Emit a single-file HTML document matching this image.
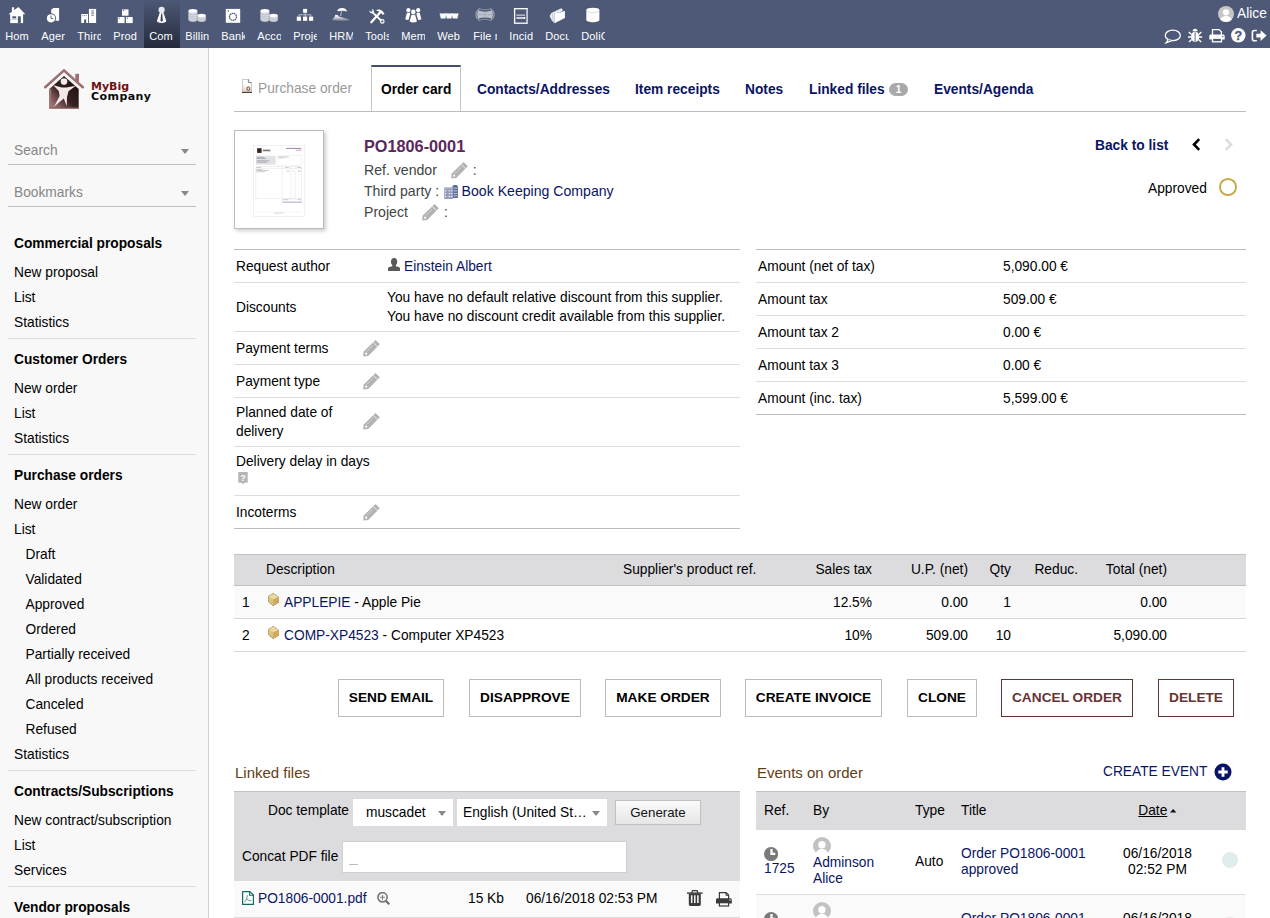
<!DOCTYPE html>
<html lang="en">
<head>
<meta charset="utf-8">
<title>Purchase order - PO1806-0001</title>
<style>
*{box-sizing:border-box}
html,body{margin:0;padding:0}
body{width:1270px;height:918px;overflow:hidden;background:#fff;color:#000;
 font-family:"Liberation Sans",Arial,Helvetica,sans-serif;font-size:13.76px;line-height:19px;position:relative}
a{color:#0a1464;text-decoration:none}
svg{display:block}

/* ---------- top bar ---------- */
#topbar{position:absolute;left:0;top:0;width:1270px;height:48px;background:#4d5976;color:#fff}
#tmenu{position:absolute;left:0;top:0;height:48px;margin:0;padding:0;list-style:none;display:flex}
#tmenu li{width:36px;height:48px;position:relative}
#tmenu li.sel{background:linear-gradient(to bottom,#4c5875 0%,#252b3c 100%)}
#tmenu li svg{position:absolute;left:0;top:0;width:36px;height:28px}
#tmenu li span{position:absolute;left:5.200px;top:28px;width:23.800px;height:16px;overflow:hidden;white-space:nowrap;
 font-size:11px;line-height:16px;color:#fff;letter-spacing:.15px}
#login{position:absolute;left:1237px;top:4px;height:20px;font-size:13.76px;line-height:20px;color:#fff}
#login svg{position:absolute;left:-19px;top:2px;width:16px;height:16px}
#ricons{position:absolute;left:1160px;top:26px;width:110px;height:20px}

/* ---------- side bar ---------- */
#side{position:absolute;left:0;top:48px;width:209px;height:870px;background:#f8f8f8;border-right:1px solid #d0d0d0;overflow:hidden}
#logo{position:absolute;left:44px;top:20px;width:112px;height:42px}
#logo .t1,#logo .t2{position:absolute;left:47px;font-family:"DejaVu Sans",Verdana,sans-serif;font-weight:bold;font-size:11px;line-height:12px;letter-spacing:0}
#logo .t1{top:12.500px;color:#6e0f14}
#logo .t2{top:23.300px;color:#0b0b0b;letter-spacing:.44px}
.ssel{position:absolute;left:8px;width:188px;height:31px;border-bottom:1px solid #c0c0c0;color:#868686;font-size:13.76px;line-height:20px;padding:7px 0 0 6px}
.ssel i{position:absolute;right:7px;top:15px;width:0;height:0;border-left:4px solid transparent;border-right:4px solid transparent;border-top:5px solid #888}
#vmenu{position:absolute;left:0;top:0;width:208px}
.blk{position:absolute;left:8px;width:188px;height:115px;border-bottom:1px solid #dcdcdc;margin:0;padding:0;list-style:none}
.blk li{position:absolute;left:6px;white-space:nowrap;height:19px;line-height:19px;color:#000}
.blk li.t{font-weight:bold;color:#000}
.blk li.s{left:17.500px}

/* ---------- main ---------- */
#main{position:absolute;left:209px;top:48px;width:1061px;height:870px;overflow:hidden}
#tabs{position:absolute;left:25px;top:63px;width:1012px;height:1px;background:#bdbdbd;z-index:2}
.tab{position:absolute;top:31.600px;font-weight:bold;color:#0a1464;white-space:nowrap;line-height:19px;height:19px}
#tabtitle{position:absolute;left:49px;top:31px;color:#999;font-size:13.76px;line-height:19px;white-space:nowrap}
#tabtitle svg{position:absolute;left:-16px;top:0}
#tabsel{position:absolute;left:162px;top:17px;width:90px;height:47px;border:1px solid #c4c4c4;border-top:2px solid #434e6b;border-bottom:0;background:#fff}
#tabsel b{position:absolute;left:9px;top:12.500px;line-height:19px;color:#000;white-space:nowrap}
.badge{display:inline-block;background:#a9a9a9;color:#fff;font-size:10px;line-height:13px;height:13px;min-width:19.600px;text-align:center;border-radius:6.500px;font-weight:bold;vertical-align:1px;margin-left:4px}

/* ---------- header card ---------- */
#thumb{position:absolute;left:25px;top:82px;width:90px;height:99px;border:1px solid #bbb;background:#fff;box-shadow:2px 2px 4px rgba(0,0,0,.2)}
#thumb svg{position:absolute;left:18.200px;top:14.200px}
#refid{position:absolute;left:155px;top:87.700px;font-size:16.250px;line-height:20px;font-weight:bold;color:#5a285a;white-space:nowrap}
#refidno{position:absolute;left:155px;top:112.100px;font-size:14.1px;line-height:21px;color:#444;white-space:nowrap}
#refidno svg{display:inline-block;vertical-align:-4px}
#backlist{position:absolute;left:886px;top:88.300px;font-weight:bold;color:#0a1464;line-height:19px;white-space:nowrap}
#status{position:absolute;left:939px;top:130.800px;line-height:19px;white-space:nowrap}
#status i{position:absolute;left:71.300px;top:-.8px;width:17.600px;height:17.600px;border:2px solid #c9ab45;border-radius:50%}
.chev{position:absolute;top:90.300px;width:10px;height:13px}

/* ---------- field tables ---------- */
table{border-collapse:collapse;border-spacing:0}
.fld{position:absolute;top:201px;border-top:1px solid #bbb}
.fld td{padding:0 2px;border-bottom:1px solid #ddd;vertical-align:middle;line-height:19px}
.fld tr:last-child td{border-bottom:1px solid #bbb}
.fld .pen{float:right;margin:1px 3px 0 0}
#fl{left:25px;width:506px}
#fr{left:547px;width:490px}

/* ---------- lines ---------- */
#lines{position:absolute;left:25px;top:506px;width:1012px;border-collapse:separate}
#lines th{font-weight:normal;background:#dcdcdf;height:32px;padding:0 4px 1px;border-top:1px solid #c2c2c5;border-bottom:1px solid #c2c2c5;text-align:right;white-space:nowrap}
#lines td{height:33px;padding:0 4px;text-align:right;border-bottom:1px solid #d6d6d6;white-space:nowrap}
#lines tr.o td{background:#fafafa}
#lines .l{text-align:left}
#lines svg{display:inline-block;vertical-align:0}

/* ---------- buttons ---------- */
.but{position:absolute;top:631px;height:38px;border:1px solid #bbb;background:#fff;font-weight:bold;text-transform:uppercase;
 color:#000;text-align:center;line-height:36px;white-space:nowrap;font-size:13.7px}
.but.del{color:#633;border-color:#633}

/* ---------- bottom ---------- */
.ttl{position:absolute;top:713.500px;font-size:15px;line-height:22px;color:#643c14;white-space:nowrap}
#gen{position:absolute;left:25px;top:743px;width:506px;height:90px;background:#dcdcdf;box-shadow:inset 0 1px 0 #c2c2c5}
#gen label{position:absolute;white-space:nowrap;line-height:19px}
.sel2{position:absolute;top:8px;height:27px;background:#fff;line-height:27px;white-space:nowrap;overflow:hidden}
.sel2 i{position:absolute;right:7px;top:12px;width:0;height:0;border-left:4.500px solid transparent;border-right:4.500px solid transparent;border-top:5px solid #888}
#genbtn{position:absolute;left:381px;top:9px;width:86px;height:25px;border:1px solid #c0c0c0;background:linear-gradient(#fafafa,#e6e6e6);text-align:center;line-height:24px;color:#141414;font-size:13.300px}
#concat{position:absolute;left:108px;top:50px;width:285px;height:32px;background:#fff;border:1px solid #d0d0d0}
#concat i{position:absolute;left:6px;top:22px;width:9px;height:1px;background:#bbb}
#frow{position:absolute;left:25px;top:833px;width:506px;height:37px;background:#fafafa;border-bottom:1px solid #ddd}
#frow span,#frow a{position:absolute;top:8px;line-height:19px;white-space:nowrap}
#frow svg{position:absolute}
#cev{position:absolute;left:894px;top:714px;font-size:13.76px;line-height:19px;color:#0a1464;white-space:nowrap}
#cevi{position:absolute;left:1004.500px;top:714.700px;width:18px;height:18px}
#ev{position:absolute;left:547px;top:743px;width:490px;border-collapse:separate}
#ev th{font-weight:normal;background:#dcdcdf;height:39px;padding:0 0 0 8px;box-shadow:inset 0 1px 0 #c2c2c5;text-align:left}
#ev td{height:65px;padding:0 0 0 8px;border-bottom:1px solid #ddd;line-height:16px;vertical-align:middle}
#ev tr.o td{background:#fafafa}
#ev .c{text-align:center;padding:0}
#ev svg{display:block}
.ava{display:block;width:18px;height:18px}
.dot{display:block;width:16px;height:16px;border-radius:50%;background:#e1ecec;margin:0 auto;position:relative;top:-2.300px}
</style>
</head>
<body>



<header id="topbar">
 <ul id="tmenu">
  <li><svg viewBox="0 0 36 28"><path d="M8.500 14.300 18.400 7 25.300 14.300z" fill="#fff"/><rect x="11.900" y="7.300" width="2.200" height="5" fill="#fff"/><rect x="10.200" y="14" width="12.900" height="9.100" fill="#fff"/><rect x="12.300" y="16.300" width="3.900" height="2.100" fill="#4d5976"/><rect x="17.900" y="16.300" width="2.900" height="6.800" fill="#4d5976"/><rect x="10.200" y="19.400" width="7.700" height=".5" fill="#4d5976" opacity=".5"/></svg><span>Home</span></li>
  <li><svg viewBox="0 0 36 28"><path d="M15.200 9.300h1.500V8.100h6.400v12.700h-7.900z" fill="#fff"/><circle cx="15" cy="18.300" r="5" fill="#4d5976"/><circle cx="15" cy="18.300" r="4.100" fill="#fff"/><path d="M15 15.600v2.900h2.300" fill="none" stroke="#4d5976" stroke-width=".9"/></svg><span>Agenda</span></li>
  <li><svg viewBox="0 0 36 28"><rect x="16.900" y="8.900" width="7.200" height="14.100" fill="#fff"/><path d="M19.300 10.800h2.600M19.300 12.300h2.600M19.300 13.800h2.600M19.300 15.300h2.600" stroke="#4d5976" stroke-width=".7"/><rect x="9.200" y="14" width="6.800" height="9" fill="#fff"/><rect x="12.100" y="19.500" width="2.100" height="3.500" fill="#4d5976"/><path d="M10.300 15.600h4.600" stroke="#4d5976" stroke-width=".7" stroke-dasharray="1 .8"/></svg><span>Third parties</span></li>
  <li><svg viewBox="0 0 36 28"><rect x="14" y="9.400" width="6.500" height="6.300" fill="#fff"/><rect x="9.800" y="17" width="6.800" height="6.100" fill="#fff"/><rect x="17.900" y="17" width="6.800" height="6.100" fill="#fff"/><path d="M14.800 10.500h1.300M10.600 18.100h1.300M18.700 18.100h1.300" stroke="#4d5976" stroke-width=".9"/></svg><span>Products</span></li>
  <li class="sel"><svg viewBox="0 0 36 28"><circle cx="17.600" cy="9.900" r="3.100" fill="#e8e8ec"/><path d="M15.600 13h4l2.600 7.800c.3 1.300-1.700 2.200-4.600 2.200s-4.900-.9-4.600-2.200z" fill="#fff"/><path d="M17.100 13.600h1.100l.6 6.900-1.200 1.500-1.100-1.500z" fill="#3d445a"/></svg><span>Commercial</span></li>
  <li><svg viewBox="0 0 36 28"><g fill="#d3d6df" stroke="#a9afbf" stroke-width=".45"><path d="M8.500 10.800v9c0 1 2 1.900 4.400 1.900s4.400-.9 4.400-1.900v-9z"/><path d="M8.500 13.100c0 1 2 1.800 4.400 1.800s4.400-.8 4.400-1.800M8.500 15.300c0 1 2 1.800 4.400 1.800s4.400-.8 4.400-1.800M8.500 17.500c0 1 2 1.800 4.400 1.800s4.400-.8 4.400-1.800" fill="none"/><path d="M17.400 15.500v4.400c0 1 1.900 1.800 4.200 1.800s4.200-.8 4.200-1.800v-4.400z"/><path d="M17.400 17.700c0 1 1.900 1.700 4.200 1.700s4.200-.7 4.200-1.700" fill="none"/></g><ellipse cx="12.900" cy="10.800" rx="4.400" ry="1.900" fill="#fff"/><ellipse cx="21.600" cy="15.500" rx="4.200" ry="1.800" fill="#fff"/></svg><span>Billing</span></li>
  <li><svg viewBox="0 0 36 28"><rect x="9.800" y="8.900" width="14.400" height="13.900" fill="#fff"/><circle cx="17" cy="16.800" r="3.500" fill="#fff" stroke="#4d5976" stroke-width="1.300" stroke-dasharray="1.600 .5"/><circle cx="12.300" cy="11" r=".8" fill="#4d5976"/></svg><span>Banks</span></li>
  <li><svg viewBox="0 0 36 28"><g fill="#d3d6df" stroke="#a9afbf" stroke-width=".45"><path d="M8.500 10.800v9c0 1 2 1.900 4.400 1.900s4.400-.9 4.400-1.900v-9z"/><path d="M8.500 13.100c0 1 2 1.800 4.400 1.800s4.400-.8 4.400-1.800M8.500 15.300c0 1 2 1.800 4.400 1.800s4.400-.8 4.400-1.800M8.500 17.500c0 1 2 1.800 4.400 1.800s4.400-.8 4.400-1.800" fill="none"/><path d="M17.400 15.500v4.400c0 1 1.900 1.800 4.200 1.800s4.200-.8 4.200-1.800v-4.400z"/><path d="M17.400 17.700c0 1 1.900 1.700 4.200 1.700s4.200-.7 4.200-1.700" fill="none"/></g><ellipse cx="12.900" cy="10.800" rx="4.400" ry="1.900" fill="#fff"/><ellipse cx="21.600" cy="15.500" rx="4.200" ry="1.800" fill="#fff"/></svg><span>Accounting</span></li>
  <li><svg viewBox="0 0 36 28"><path d="M17.100 12.800v2M10.900 16.600v-1.800h12.100v1.800M17.100 14.800v1.800" fill="none" stroke="#cfd3dd" stroke-width=".8"/><rect x="15.100" y="8.900" width="4" height="3.900" fill="#fff"/><rect x="8.800" y="16.600" width="4.200" height="4.200" fill="#fff"/><rect x="15" y="16.600" width="4.200" height="4.200" fill="#fff"/><rect x="21" y="16.600" width="4.200" height="4.200" fill="#fff"/></svg><span>Projects</span></li>
  <li><svg viewBox="0 0 36 28"><path d="M13.200 11.300c.3-2 2.300-3.200 5-3.200s4.500 1.300 4.800 3.500c-1.500-.6-3-.9-4.800-.9s-3.500.2-5 .6z" fill="#fff"/><path d="M17.500 11.200 16.600 16" stroke="#c9cdd8" stroke-width=".9"/><defs><linearGradient id="isl" x1="0" y1="0" x2="0" y2="1"><stop offset="0" stop-color="#fff"/><stop offset=".45" stop-color="#fff" stop-opacity=".75"/><stop offset="1" stop-color="#fff" stop-opacity=".15"/></linearGradient></defs><path d="M8 20.200 10.500 17l.8-2.300 2.400.2 1.200 1.700 10.200 3 .1.900-8.200.4z" fill="url(#isl)"/></svg><span>HRM</span></li>
  <li><svg viewBox="0 0 36 28"><path d="M11.300 22.200 20.300 12.300" stroke="#fff" stroke-width="2.300" stroke-linecap="round"/><path d="M15.800 10.300c2.500-1.400 5-.8 6.800 1l1.900 2.300-1.600 1.500-1.800-2c-1.400-1.500-3-2-5.300-2.800z" fill="#fff"/><path d="M12.800 12.600 21.200 20.600" stroke="#fff" stroke-width="2"/><path d="M9.300 10.600c0 2 1.500 3.200 3.500 2.700l1-1.300c.5-1.600-.5-3.100-2.300-3.100l1.200 1.800-1.400 1.400z" fill="#fff"/><circle cx="22.300" cy="21.400" r="1.700" fill="none" stroke="#fff" stroke-width="1.200"/></svg><span>Tools</span></li>
  <li><svg viewBox="0 0 36 28"><circle cx="12.400" cy="10.200" r="2.100" fill="#fff"/><circle cx="22.200" cy="10.200" r="2.100" fill="#fff"/><path d="M10.900 12.700h3l1.600 6.400c-1.500 1.200-4.700 1.400-6.300.2z" fill="#fff"/><path d="M20.700 12.700h3l1.700 6.600c-1.600 1.200-4.800 1-6.300-.2z" fill="#fff"/><circle cx="17.300" cy="11.900" r="3" fill="#4d5976"/><path d="M14.800 14.400h5l2.300 7.400c-2.300 1.700-7.300 1.700-9.600 0z" fill="#4d5976" stroke="#4d5976" stroke-width="1.200"/><circle cx="17.300" cy="11.900" r="2.300" fill="#fff"/><path d="M15.500 14.700h3.600l1.900 6.700c-1.900 1.300-5.500 1.300-7.400 0z" fill="#fff"/></svg><span>Members</span></li>
  <li><svg viewBox="0 0 36 28"><text x="7.900" y="17.500" font-family="DejaVu Sans,Liberation Sans,sans-serif" font-weight="bold" font-size="7.600" fill="#fff" textLength="18.200" lengthAdjust="spacingAndGlyphs" stroke="#fff" stroke-width=".9" stroke-linejoin="miter">www</text></svg><span style="width:22.700px">Websites</span></li>
  <li><svg viewBox="0 0 36 28"><path d="M10.300 10.300c4.500 1.900 9 1.900 13.500 0 1.500 2.800 1.500 5.700 0 8.500-4.500-1.900-9-1.900-13.500 0-1.500-2.800-1.500-5.700 0-8.500z" fill="#fff" fill-opacity=".62"/><path d="M11.500 8.600c-4.700 2.500-4.700 9.400 0 11.900M22.600 8.600c4.700 2.500 4.700 9.400 0 11.900" fill="none" stroke="#fff" stroke-opacity=".55" stroke-width="1"/><path d="M11.300 8.700c3.800 1.600 7.700 1.600 11.500 0M11.300 20.400c3.800-1.600 7.700-1.600 11.500 0" fill="none" stroke="#fff" stroke-opacity=".45" stroke-width=".7"/><path d="M17.050 11.700v5.700M9.300 14.550h15.500" stroke="#4d5976" stroke-opacity=".3" stroke-width=".5"/></svg><span>File manager</span></li>
  <li><svg viewBox="0 0 36 28"><rect x="10.600" y="8.700" width="12.600" height="14.500" fill="none" stroke="#fff" stroke-width="1.300"/><path d="M23.300 9v14" stroke="#c3c7d2" stroke-width="1.200"/><path d="M12.300 15.200h8.800" stroke="#aeb4c3" stroke-width="1.700"/><path d="M12.300 18h8.800" stroke="#d9dce4" stroke-width="1.800"/><path d="M20 18h1.200" stroke="#fff" stroke-width="1.800"/></svg><span>Incidents</span></li>
  <li><svg viewBox="0 0 36 28"><path d="M9.600 15.900 11.300 13 21.300 8.200 22.800 9.800 22.200 11.600 14.500 13.400V23.300L11.900 20.800z" fill="#fff" fill-opacity=".88"/><path d="M12.300 13.600 13.300 21.600" stroke="#4d5976" stroke-opacity=".35" stroke-width=".6"/><path d="M14.500 13.400 19.600 12.200 20.200 12.600 24.900 10.800V17.900L14.500 23.300z" fill="#fff"/></svg><span>Documents</span></li>
  <li><svg viewBox="0 0 36 28"><path d="M10.300 9.900v10.200c0 1.200 2.900 2.200 6.600 2.200s6.500-1 6.500-2.200V9.900z" fill="#fff"/><ellipse cx="16.850" cy="9.900" rx="6.550" ry="2.200" fill="#fff"/><path d="M10.300 10.300c0 1.200 2.900 2.200 6.600 2.200s6.500-1 6.500-2.200" fill="none" stroke="#4d5976" stroke-opacity=".35" stroke-width=".6"/></svg><span>DoliCloud</span></li>
 </ul>
 <div id="login"><svg viewBox="0 0 16 16"><clipPath id="avc"><circle cx="8" cy="8" r="8"/></clipPath><g clip-path="url(#avc)"><rect width="16" height="16" fill="#c6c6c6"/><circle cx="8" cy="6.300" r="3.100" fill="#fff"/><path d="M2 16c0-4 2.500-6 6-6s6 2 6 6z" fill="#fff"/></g></svg>Alice</div>
 <svg id="ricons" viewBox="0 0 110 20">
  <g fill="none" stroke="#fff"><ellipse cx="12.800" cy="9.400" rx="7.500" ry="5.300" stroke-width="1.300"/><path d="M8.300 13.600 6 17l5.600-2.400" stroke-width="1.200" fill="#4d5976"/></g>
  <g><ellipse cx="35.100" cy="10.700" rx="4.100" ry="5.300" fill="#fff"/><path d="M32.600 5.300a2.500 2.500 0 0 1 5 0z" fill="#fff"/><path d="M35.100 6.300v9.500" stroke="#4d5976" stroke-width=".9"/><path d="M31.500 8.500 28.800 6M38.700 8.500 41.400 6M31.300 11h-3.300M38.900 11h3.300M31.600 13.500 29 16M38.600 13.500 41.200 16" stroke="#fff" stroke-width="1.400"/></g>
  <g><path d="M52.500 9.500V3.600h6.600l2.300 2.200v3.700" fill="none" stroke="#fff" stroke-width="1.300"/><path d="M49.300 13.500v-3.300c0-.9.700-1.600 1.600-1.600h12.200c.9 0 1.600.7 1.600 1.600v3.300z" fill="#fff"/><rect x="52.500" y="12.200" width="9" height="3.600" fill="#4d5976" stroke="#fff" stroke-width="1.300"/><circle cx="62.800" cy="10.500" r=".7" fill="#4d5976"/></g>
  <g><circle cx="78.300" cy="9.300" r="7.200" fill="#fff"/><text x="78.300" y="13.800" text-anchor="middle" font-family="Liberation Sans,Arial,sans-serif" font-weight="bold" font-size="12.500" fill="#4d5976" stroke="#4d5976" stroke-width=".3">?</text></g>
  <g><path d="M96.800 4.500h-2.400c-1.200 0-2 .8-2 2v6.200c0 1.200.8 2 2 2h2.400" fill="none" stroke="#fff" stroke-width="1.600"/><path d="M96.300 7.700h4.300V4.300l6 5.300-6 5.300v-3.400h-4.300z" fill="#fff"/></g>
 </svg>
</header>

<aside id="side">
 <div id="logo">
  <svg width="42" height="42" viewBox="0 0 42 42"><defs><linearGradient id="hg" x1="0" y1="1" x2="1" y2="0"><stop offset="0" stop-color="#b98b8b"/><stop offset=".45" stop-color="#3a2222"/><stop offset="1" stop-color="#140c0c"/></linearGradient></defs><path d="M5.300 40.500V21L20 8l14.700 13v19.500z" fill="url(#hg)"/><path d="M6.300 40V21" stroke="#9d6f6f" stroke-width="2"/><path d="M5.300 40h29.400" stroke="#8a5c5c" stroke-width="1.200"/><rect x="31.300" y="5.800" width="3.700" height="8" fill="#9d6f6f"/><path d="M1.200 19.200 20 2.400 38.800 19.200" fill="none" stroke="#9d6f6f" stroke-width="2.600" stroke-linecap="round"/><path d="M2.500 19.200 20 4.200 37.500 19.200" fill="none" stroke="#f8f8f8" stroke-width="1" transform="translate(0 2.400)"/><circle cx="20" cy="13.600" r="3.300" fill="#f3e9e9"/><path d="M9.300 17.300 17.800 19.400h4.600L31.800 17.700l-7.300 5.600-1.500 5.700-.3 9-2.900-7.500-9.600 7.900 5.400-10.400-.8-5z" fill="#f3e9e9"/></svg>
  <span class="t1">MyBig</span><span class="t2">Company</span>
 </div>
 <div class="ssel" style="top:86px">Search<i></i></div>
 <div class="ssel" style="top:128px">Bookmarks<i></i></div>
 <nav id="vmenu">
  <ul class="blk" style="top:176px">
   <li class="t" style="top:10px">Commercial proposals</li>
   <li style="top:39px">New proposal</li>
   <li style="top:64px">List</li>
   <li style="top:89px">Statistics</li>
  </ul>
  <ul class="blk" style="top:292px">
   <li class="t" style="top:10px">Customer Orders</li>
   <li style="top:39px">New order</li>
   <li style="top:64px">List</li>
   <li style="top:89px">Statistics</li>
  </ul>
  <ul class="blk" style="top:408px;height:315px">
   <li class="t" style="top:10px">Purchase orders</li>
   <li style="top:39px">New order</li>
   <li style="top:64px">List</li>
   <li class="s" style="top:89px">Draft</li>
   <li class="s" style="top:114px">Validated</li>
   <li class="s" style="top:139px">Approved</li>
   <li class="s" style="top:164px">Ordered</li>
   <li class="s" style="top:189px">Partially received</li>
   <li class="s" style="top:214px">All products received</li>
   <li class="s" style="top:239px">Canceled</li>
   <li class="s" style="top:264px">Refused</li>
   <li style="top:289px">Statistics</li>
  </ul>
  <ul class="blk" style="top:724px">
   <li class="t" style="top:10px">Contracts/Subscriptions</li>
   <li style="top:39px">New contract/subscription</li>
   <li style="top:64px">List</li>
   <li style="top:89px">Services</li>
  </ul>
  <ul class="blk" style="top:840px;border-bottom:0">
   <li class="t" style="top:10px">Vendor proposals</li>
  </ul>
 </nav>
</aside>

<main id="main">
 <div id="tabs"></div>
 <div id="tabtitle"><svg width="10" height="14" viewBox="0 0 10 14"><defs><linearGradient id="pg" x1="0" y1="0" x2="0" y2="1"><stop offset=".35" stop-color="#fff"/><stop offset="1" stop-color="#f1c9b4"/></linearGradient></defs><path d="M.4.400h6l3.200 3.200v9.700H.4z" fill="url(#pg)" stroke="#9a9a9a" stroke-width=".6"/><path d="M6.400.400v3.200h3.200" fill="#fff" stroke="#555" stroke-width=".7"/><path d="M0 13.400h10" stroke="#333" stroke-width="1"/><ellipse cx="6.300" cy="9.700" rx="1.400" ry="1.800" fill="none" stroke="#444" stroke-width=".9"/></svg>Purchase order</div>
 <div id="tabsel"><b>Order card</b></div>
 <a class="tab" style="left:268px">Contacts/Addresses</a>
 <a class="tab" style="left:426px">Item receipts</a>
 <a class="tab" style="left:536px">Notes</a>
 <a class="tab" style="left:600px">Linked files<span class="badge">1</span></a>
 <a class="tab" style="left:725px">Events/Agenda</a>

 <div id="thumb"><svg width="52" height="72" viewBox="0 0 52 72"><rect x=".25" y=".25" width="51.200" height="71.200" fill="#fff" stroke="#dde1ea" stroke-width=".5"/><rect x="4.100" y="3.200" width="4.500" height="4.700" fill="#3b2323"/><rect x="9.800" y="4.600" width="7.500" height="1.700" fill="#444" opacity=".7"/><rect x="33" y="2.900" width="15.300" height="1.100" fill="#5a5f9a" opacity=".65"/><rect x="42.600" y="4.700" width="5.700" height=".9" fill="#d0566a" opacity=".65"/><rect x="2.900" y="10.800" width="19.800" height="8.800" fill="#e2e2e2"/><g fill="#5f6488" opacity=".7"><rect x="3.800" y="11.900" width="7.500" height=".6"/><rect x="3.800" y="13" width="9" height=".6"/><rect x="3.800" y="15.600" width="12.500" height=".6"/><rect x="3.800" y="16.800" width="10" height=".6"/></g><rect x="24.400" y="10.300" width="24.200" height="9.900" fill="none" stroke="#e4e4ea" stroke-width=".4"/><rect x="25.200" y="11.700" width="10.500" height=".6" fill="#777" opacity=".7"/><rect x="25.200" y="12.800" width="6" height=".5" fill="#999" opacity=".6"/><rect x="2.900" y="21.800" width="45.700" height="32" fill="none" stroke="#d9d9e0" stroke-width=".4"/><path d="M2.900 23.400h45.700M29.200 21.800v32M38 21.800v32M42.100 21.800v32" stroke="#dcdce2" stroke-width=".4"/><g fill="#666" opacity=".65"><rect x="3.300" y="22.300" width="5" height=".5"/><rect x="3.300" y="24.400" width="6" height=".5"/><rect x="3.300" y="25.500" width="12.500" height=".5"/><rect x="3.300" y="26.600" width="9" height=".5"/><rect x="33.500" y="25.800" width="3.200" height=".5"/><rect x="39.600" y="25.800" width="1" height=".5"/><rect x="44.800" y="25.800" width="3.200" height=".5"/><rect x="32" y="22.300" width="4" height=".5"/><rect x="44" y="22.300" width="4" height=".5"/></g><rect x="29.800" y="54" width="18.800" height="3.800" fill="#fff" stroke="#cfcfd6" stroke-width=".4"/><rect x="29.800" y="56.500" width="18.800" height="1.300" fill="#b9bdd6"/><rect x="30.300" y="54.600" width="5" height=".5" fill="#666" opacity=".6"/><rect x="45" y="54.600" width="3" height=".5" fill="#666" opacity=".6"/><path d="M3 67h45.500" stroke="#e6e6e6" stroke-width=".4"/><rect x="21" y="67.800" width="9.500" height=".5" fill="#999" opacity=".7"/></svg></div>
 <div id="refid">PO1806-0001</div>
 <div id="refidno">Ref. vendor<svg class="pen" style="margin:0 5px 0 14px" width="17" height="17" viewBox="0 0 17 17"><path d="M12.600 0 16.800 4.200 5.200 16 .3 16.400.5 11.800z" fill="#b2b2b2"/><path d="M10.200 2.400 14.400 6.600" stroke="#fff" stroke-width=".8"/><path d="M10 5.300 3.600 11.700" stroke="#fff" stroke-width=".6" stroke-dasharray="1.200 .5"/><circle cx="3.200" cy="13.700" r="1.100" fill="#fff"/></svg>:<br>Third party : <svg style="margin:0 3.500px 0 1px;vertical-align:-3px" width="14" height="14" viewBox="0 0 14 14"><path d="M8.400 12.900V1.500C8.400.6 9.300 0 11.100 0s2.800.6 2.800 1.500v11.400z" fill="#5f6c96"/><path d="M9.700 3.200h3.500M9.700 5.900h3.500M9.700 8.500h3.500M9.700 10.800h3.500" stroke="#d4d8ea" stroke-width=".8"/><rect x=".2" y="2.400" width="9" height="11.600" fill="#969dbd"/><path d="M.2 3h9" stroke="#b9bed6" stroke-width="1"/><g fill="#fff"><rect x="1" y="5.200" width="1.100" height="1.100"/><rect x="4.800" y="5.200" width="1.100" height="1.100"/><rect x="7.200" y="5.200" width="1.100" height="1.100"/><rect x="1" y="8.200" width="1.100" height="1.100"/><rect x="4.800" y="8.200" width="1.100" height="1.100"/><rect x="7.200" y="8.200" width="1.100" height="1.100"/><rect x="1" y="11" width="1.100" height="1.100"/><rect x="4.800" y="11" width="1.100" height="1.100"/><rect x="7.200" y="11" width="1.100" height="1.100"/></g></svg><a>Book Keeping Company</a><br>Project<svg class="pen" style="margin:0 5px 0 14px" width="17" height="17" viewBox="0 0 17 17"><path d="M12.600 0 16.800 4.200 5.200 16 .3 16.400.5 11.800z" fill="#b2b2b2"/><path d="M10.200 2.400 14.400 6.600" stroke="#fff" stroke-width=".8"/><path d="M10 5.300 3.600 11.700" stroke="#fff" stroke-width=".6" stroke-dasharray="1.200 .5"/><circle cx="3.200" cy="13.700" r="1.100" fill="#fff"/></svg>:</div>
 <a id="backlist">Back to list</a>
 <svg class="chev" style="left:982px" viewBox="0 0 10 13"><path d="M8.2 1.2 3 6.5l5.2 5.3" fill="none" stroke="#000" stroke-width="2.6"/></svg>
 <svg class="chev" style="left:1015px" viewBox="0 0 10 13"><path d="M1.8 1.2 7 6.5l-5.2 5.3" fill="none" stroke="#ddd" stroke-width="2.6"/></svg>
 <div id="status">Approved<i></i></div>

 <table class="fld" id="fl">
  <tr style="height:33px"><td style="width:151px">Request author</td><td><svg style="display:inline-block;vertical-align:0;margin:0 4px 0 1px" width="12" height="13" viewBox="0 0 12 13"><ellipse cx="6.100" cy="3.800" rx="3.100" ry="3.800" fill="#575a57"/><rect x="4.300" y="6" width="3.600" height="4" fill="#575a57"/><path d="M0 13v-2.200c0-1.300.8-1.900 2.200-2.100l2.400-.4h3.100l2.300.4c1.400.2 2 .8 2 2.100V13z" fill="#575a57"/></svg><a>Einstein Albert</a></td></tr>
  <tr style="height:49px"><td>Discounts</td><td>You have no default relative discount from this supplier.<br>You have no discount credit available from this supplier.</td></tr>
  <tr style="height:33px"><td>Payment terms<svg class="pen" width="17" height="17" viewBox="0 0 17 17"><path d="M12.600 0 16.800 4.200 5.200 16 .3 16.400.5 11.800z" fill="#b2b2b2"/><path d="M10.200 2.400 14.400 6.600" stroke="#fff" stroke-width=".8"/><path d="M10 5.300 3.600 11.700" stroke="#fff" stroke-width=".6" stroke-dasharray="1.200 .5"/><circle cx="3.200" cy="13.700" r="1.100" fill="#fff"/></svg></td><td></td></tr>
  <tr style="height:33px"><td>Payment type<svg class="pen" width="17" height="17" viewBox="0 0 17 17"><path d="M12.600 0 16.800 4.200 5.200 16 .3 16.400.5 11.800z" fill="#b2b2b2"/><path d="M10.200 2.400 14.400 6.600" stroke="#fff" stroke-width=".8"/><path d="M10 5.300 3.600 11.700" stroke="#fff" stroke-width=".6" stroke-dasharray="1.200 .5"/><circle cx="3.200" cy="13.700" r="1.100" fill="#fff"/></svg></td><td></td></tr>
  <tr style="height:49px"><td><svg class="pen" style="margin-top:10px" width="17" height="17" viewBox="0 0 17 17"><path d="M12.600 0 16.800 4.200 5.200 16 .3 16.400.5 11.800z" fill="#b2b2b2"/><path d="M10.200 2.400 14.400 6.600" stroke="#fff" stroke-width=".8"/><path d="M10 5.300 3.600 11.700" stroke="#fff" stroke-width=".6" stroke-dasharray="1.200 .5"/><circle cx="3.200" cy="13.700" r="1.100" fill="#fff"/></svg>Planned date of<br>delivery</td><td></td></tr>
  <tr style="height:49px"><td style="white-space:nowrap;vertical-align:top;padding-top:5px">Delivery delay in days<br><svg width="10" height="12.500" viewBox="0 0 10 12.500" style="margin:1px 0 0 2px"><path d="M.3 0h9.400v10.700H6.300L5 12.200 3.700 10.700H.3z" fill="#b5b5b5"/><text x="5" y="8.600" text-anchor="middle" font-family="Liberation Sans,Arial,sans-serif" font-weight="bold" font-size="9" fill="#fff">?</text></svg></td><td></td></tr>
  <tr style="height:33px"><td>Incoterms<svg class="pen" width="17" height="17" viewBox="0 0 17 17"><path d="M12.600 0 16.800 4.200 5.200 16 .3 16.400.5 11.800z" fill="#b2b2b2"/><path d="M10.200 2.400 14.400 6.600" stroke="#fff" stroke-width=".8"/><path d="M10 5.300 3.600 11.700" stroke="#fff" stroke-width=".6" stroke-dasharray="1.200 .5"/><circle cx="3.200" cy="13.700" r="1.100" fill="#fff"/></svg></td><td></td></tr>
 </table>

 <table class="fld" id="fr">
  <tr style="height:33px"><td style="width:245px">Amount (net of tax)</td><td>5,090.00 €</td></tr>
  <tr style="height:33px"><td>Amount tax</td><td>509.00 €</td></tr>
  <tr style="height:33px"><td>Amount tax 2</td><td>0.00 €</td></tr>
  <tr style="height:33px"><td>Amount tax 3</td><td>0.00 €</td></tr>
  <tr style="height:33px"><td>Amount (inc. tax)</td><td>5,599.00 €</td></tr>
 </table>

 <table id="lines">
  <tr><th style="width:28px"></th><th class="l" style="width:357px">Description</th><th class="l" style="width:160px">Supplier's product ref.</th><th style="width:97px">Sales tax</th><th style="width:96px">U.P. (net)</th><th style="width:43px">Qty</th><th style="width:67px">Reduc.</th><th style="width:89px">Total (net)</th><th></th></tr>
  <tr class="o"><td class="l" style="padding-left:8px">1</td><td class="l"><svg style="margin:0 5px 0 2px;vertical-align:1px" width="11" height="13" viewBox="0 0 11 13"><path d="M5.400.3 10.700 4.300V9.600L5 12.700.4 8.700V3.300z" fill="#dcc27c" stroke="#7c5f2c" stroke-width=".7" stroke-dasharray="1.300 .6"/><path d="M5.400.7 10.300 4.400 5.300 6.300.8 3.500z" fill="#ecd9a0"/><path d="M5.300 6.300 10.300 4.400V9.400L5.100 12.200z" fill="#cfa95c"/></svg><a>APPLEPIE</a> - Apple Pie</td><td></td><td>12.5%</td><td>0.00</td><td>1</td><td></td><td>0.00</td><td></td></tr>
  <tr><td class="l" style="padding-left:8px">2</td><td class="l"><svg style="margin:0 5px 0 2px;vertical-align:1px" width="11" height="13" viewBox="0 0 11 13"><path d="M5.400.3 10.700 4.300V9.600L5 12.700.4 8.700V3.300z" fill="#dcc27c" stroke="#7c5f2c" stroke-width=".7" stroke-dasharray="1.300 .6"/><path d="M5.400.7 10.300 4.400 5.300 6.300.8 3.500z" fill="#ecd9a0"/><path d="M5.300 6.300 10.300 4.400V9.400L5.100 12.200z" fill="#cfa95c"/></svg><a>COMP-XP4523</a> - Computer XP4523</td><td></td><td>10%</td><td>509.00</td><td>10</td><td></td><td>5,090.00</td><td></td></tr>
 </table>

 <a class="but" style="left:129px;width:106px">Send email</a>
 <a class="but" style="left:260px;width:112px">Disapprove</a>
 <a class="but" style="left:396px;width:116px">Make order</a>
 <a class="but" style="left:536px;width:137px">Create invoice</a>
 <a class="but" style="left:698px;width:70px">Clone</a>
 <a class="but del" style="left:792px;width:132px">Cancel order</a>
 <a class="but del" style="left:949px;width:76px">Delete</a>

 <div class="ttl" style="left:26px">Linked files</div>
 <div id="gen">
  <label style="left:34px;top:10px">Doc template</label>
  <div class="sel2" style="left:119px;width:100px;padding-left:13px">muscadet<i></i></div>
  <div class="sel2" style="left:223px;width:150px;padding-left:6px">English (United St&hellip;<i></i></div>
  <div id="genbtn">Generate</div>
  <label style="left:8px;top:56px">Concat PDF file</label>
  <div id="concat"><i></i></div>
 </div>
 <div id="frow">
  <svg style="left:8px;top:10px" width="12" height="14" viewBox="0 0 12 14"><path d="M.6.600h7.200l3.600 3.400v9.400H.6z" fill="#fff" stroke="#15695f" stroke-width="1.200" stroke-linejoin="round"/><path d="M7.600.800v3.400h3.600" fill="none" stroke="#15695f" stroke-width="1.100"/><path d="M5.200 4.200c.3 2.500-1 5.300-3 7.100M4.900 8.300c1.300.9 2.800 1.300 4.500 1.200" fill="none" stroke="#2a7f86" stroke-width=".8"/></svg>
  <a style="left:24px">PO1806-0001.pdf</a>
  <svg style="left:143px;top:11px" width="13.500" height="13.500" viewBox="0 0 13.500 13.500"><circle cx="5.500" cy="5.300" r="4.600" fill="none" stroke="#7a7a7a" stroke-width="1.700"/><path d="M3.100 5.300h4.800M5.500 2.900v4.800" stroke="#7a7a7a" stroke-width="1.100"/><path d="M8.900 8.900 12.300 12.300" stroke="#6a6a6a" stroke-width="2.100"/></svg>
  <span style="left:234px">15 Kb</span>
  <span style="left:292px">06/16/2018 02:53 PM</span>
  <svg style="left:453.300px;top:9px" width="15.600" height="16" viewBox="0 0 15.600 16"><path d="M0 3.100h15.600" stroke="#3a3a3a" stroke-width="1.400"/><path d="M4.600 2.900 5.500.7h4.600l.9 2.200" fill="none" stroke="#3a3a3a" stroke-width="1.200"/><path d="M1.800 3.600h12v10.700c0 1-.6 1.700-1.600 1.700H3.400c-1 0-1.600-.7-1.600-1.700z" fill="#3a3a3a"/><path d="M4.700 5.300v7.800M7.800 5.300v7.800M10.900 5.300v7.800" stroke="#fafafa" stroke-width="1.500"/></svg>
  <svg style="left:482.300px;top:11px" width="15.800" height="14.600" viewBox="0 0 15.800 14.600"><path d="M3.400 7V.6h6.700l2.500 2.400v4" fill="#fafafa" stroke="#3a3a3a" stroke-width="1.200"/><path d="M10 .7v2.600h2.600" fill="none" stroke="#3a3a3a" stroke-width="1"/><path d="M0 11.600V7.800c0-.9.700-1.600 1.600-1.600h12.600c.9 0 1.600.7 1.600 1.600v3.800z" fill="#3a3a3a"/><rect x="3.400" y="10.700" width="9.200" height="3.300" fill="#fafafa" stroke="#3a3a3a" stroke-width="1.200"/><circle cx="14" cy="8" r=".7" fill="#fafafa"/></svg>
 </div>

 <div class="ttl" style="left:548px">Events on order</div>
 <a id="cev">CREATE EVENT</a>
 <svg id="cevi" viewBox="0 0 19 19"><circle cx="9.5" cy="9.5" r="9" fill="#0a1464"/><path d="M9.5 4.5v10M4.500 9.5h10" stroke="#fff" stroke-width="3"/></svg>
 <table id="ev">
  <tr><th style="width:49px">Ref.</th><th style="width:102px">By</th><th style="width:46px">Type</th><th style="width:148px">Title</th><th class="c" style="width:113px"><u>Date</u><svg style="display:inline-block;margin-left:3px;vertical-align:2.500px" width="6.400" height="3.400" viewBox="0 0 6.400 3.400"><path d="M0 3.400 3.200 0l3.200 3.400z" fill="#111"/></svg></th><th></th></tr>
  <tr><td><svg width="14.200" height="14.200" viewBox="0 0 14.200 14.200" style="margin:0"><circle cx="7.100" cy="7.100" r="7.100" fill="#7a7a7a"/><path d="M7.500 1.900v4.900M6.300 6.800h5" fill="none" stroke="#fff" stroke-width="2.300"/></svg><a>1725</a></td><td><svg class="ava" viewBox="0 0 18 18"><circle cx="9" cy="9" r="9" fill="#c2c2c2"/><circle cx="8.900" cy="7.700" r="3.700" fill="#fff"/><ellipse cx="8.900" cy="18.500" rx="6.600" ry="6.700" fill="#fff"/></svg><a>Adminson<br>Alice</a></td><td>Auto</td><td><a>Order PO1806-0001<br>approved</a></td><td class="c">06/16/2018<br>02:52 PM</td><td class="c"><span class="dot"></span></td></tr>
  <tr class="o"><td><svg width="14.200" height="14.200" viewBox="0 0 14.200 14.200" style="margin:0"><circle cx="7.100" cy="7.100" r="7.100" fill="#7a7a7a"/><path d="M7.500 1.900v4.900M6.300 6.800h5" fill="none" stroke="#fff" stroke-width="2.300"/></svg><a>1724</a></td><td><svg class="ava" viewBox="0 0 18 18"><circle cx="9" cy="9" r="9" fill="#c2c2c2"/><circle cx="8.900" cy="7.700" r="3.700" fill="#fff"/><ellipse cx="8.900" cy="18.500" rx="6.600" ry="6.700" fill="#fff"/></svg><a>Adminson<br>Alice</a></td><td>Auto</td><td><a>Order PO1806-0001<br>validated</a></td><td class="c">06/16/2018<br>02:52 PM</td><td class="c"><span class="dot"></span></td></tr>
 </table>
</main>

</body>
</html>
